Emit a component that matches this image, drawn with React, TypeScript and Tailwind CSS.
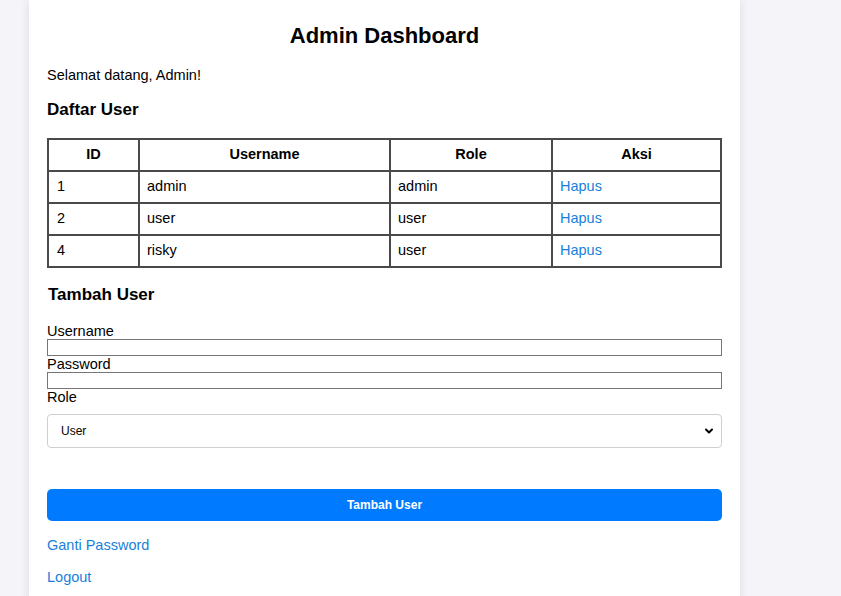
import { ChevronDown } from "lucide-react";

const users = [
  { id: 1, username: "admin", role: "admin" },
  { id: 2, username: "user", role: "user" },
  { id: 4, username: "risky", role: "user" },
];

export default function App() {
  return (
    <div className="min-h-[596px] bg-[#f4f4f9] font-['Liberation_Sans',Arial,sans-serif] text-black">
      <div className="ml-[29px] w-[711px] bg-white px-[18px] pt-[22px] pb-[20px] shadow-[0_0_10px_rgba(0,0,0,0.1)]">
        <h2 className="text-center text-[22px] font-bold leading-[28px]">Admin Dashboard</h2>
        <p className="mt-[17px] text-[14.5px] leading-[16px]">Selamat datang, Admin!</p>
        <h3 className="mt-[17px] text-[17px] font-bold leading-[20px]">Daftar User</h3>

        <table className="mt-[18px] w-[675px] border-collapse border-2 border-[#4a4a4a] text-[14.5px]">
          <thead>
            <tr className="h-[32px]">
              <th className="w-[91px] border-2 border-[#4a4a4a] text-center font-bold">ID</th>
              <th className="w-[251px] border-2 border-[#4a4a4a] text-center font-bold">Username</th>
              <th className="w-[162px] border-2 border-[#4a4a4a] text-center font-bold">Role</th>
              <th className="border-2 border-[#4a4a4a] text-center font-bold">Aksi</th>
            </tr>
          </thead>
          <tbody>
            {users.map((u) => (
              <tr key={u.id} className="h-[32px]">
                <td className="border-2 border-[#4a4a4a] px-[8px]">{u.id}</td>
                <td className="border-2 border-[#4a4a4a] px-[7px]">{u.username}</td>
                <td className="border-2 border-[#4a4a4a] px-[7px]">{u.role}</td>
                <td className="border-2 border-[#4a4a4a] px-[7px]">
                  <a href="#" className="text-[#1a7fdb]">Hapus</a>
                </td>
              </tr>
            ))}
          </tbody>
        </table>

        <h3 className="mt-[17px] pl-[1px] text-[17px] font-bold leading-[20px]">Tambah User</h3>

        <form className="mt-[18px] text-[14.5px]">
          <label className="block leading-[16px]">Username</label>
          <input className="block h-[17px] w-full border border-[#767676]" />
          <label className="block leading-[16px]">Password</label>
          <input type="password" className="block h-[17px] w-full border border-[#767676]" />
          <label className="block leading-[16px]">Role</label>
          <div className="relative mt-[9px] flex h-[34px] w-full items-center rounded-[4px] border border-[#cfcfcf] px-[13px] text-[12px]">
            <span>User</span>
            <ChevronDown className="absolute right-[6px] h-[12px] w-[12px]" strokeWidth={4} />
          </div>
          <button
            type="button"
            className="mt-[41px] flex h-[32px] w-full items-center justify-center rounded-[5px] bg-[#007bff] text-[12px] font-semibold text-white"
          >
            Tambah User
          </button>
        </form>

        <div className="mt-[16px] flex flex-col gap-[16px] text-[14.5px] leading-[16px]">
          <a href="#" className="text-[#1a7fdb]">Ganti Password</a>
          <a href="#" className="text-[#1a7fdb]">Logout</a>
        </div>
      </div>
    </div>
  );
}
